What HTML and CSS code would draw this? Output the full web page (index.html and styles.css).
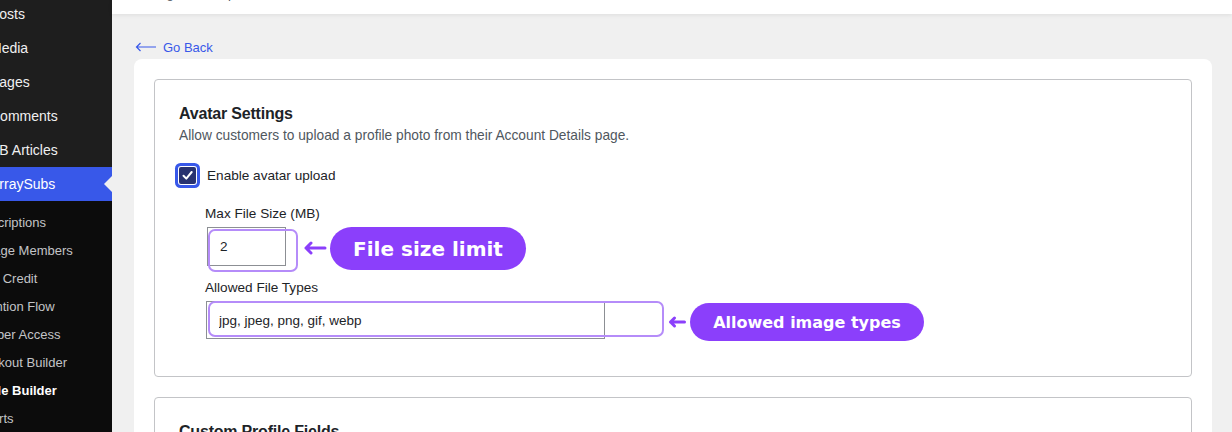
FILE: index.html
```html
<!DOCTYPE html>
<html lang="en">
<head>
<meta charset="UTF-8">
<title>Profile Builder - Avatar Settings</title>
<link rel="stylesheet" href="styles.css">
</head>
<body>
<div class="layout">

<aside class="sidebar">
  <ul class="menu">
    <li>Posts</li>
    <li>Media</li>
    <li>Pages</li>
    <li>Comments</li>
    <li>KB Articles</li>
    <li class="active">ArraySubs</li>
  </ul>
  <ul class="submenu">
    <li>Subscriptions</li>
    <li>Manage Members</li>
    <li>Store Credit</li>
    <li>Retention Flow</li>
    <li>Member Access</li>
    <li>Checkout Builder</li>
    <li class="current">Profile Builder</li>
    <li>Reports</li>
  </ul>
</aside>

<main class="main">
  <header class="topbar">
    <div class="crumbs">Manage Subscriptions / Profile Builder</div>
  </header>

  <div class="content">
    <a class="back" href="#">
      <svg width="22" height="10" viewBox="0 0 22 10"><path d="M21 5H1.5M5.5 1L1.5 5l4 4" fill="none" stroke="#3858e9" stroke-width="1.2"/></svg>
      Go Back
    </a>

    <div class="card">
      <section class="box">
        <h3>Avatar Settings</h3>
        <p class="desc">Allow customers to upload a profile photo from their Account Details page.</p>

        <label class="check">
          <span class="tick">
            <svg width="13" height="13" viewBox="0 0 13 13"><path d="M2.5 6.8l2.8 2.8 5.4-6.6" fill="none" stroke="#fff" stroke-width="2" stroke-linecap="round" stroke-linejoin="round"/></svg>
          </span>
          Enable avatar upload
        </label>

        <div class="fields">
          <div class="field">
            <div class="label">Max File Size (MB)</div>
            <div class="row">
              <div class="mark mark-size">
                <input class="input input-size" type="text" value="2">
              </div>
              <svg class="arrow arrow-size" width="24" height="14" viewBox="0 0 24 14"><path d="M22 7H3M8 2L3 7l5 5" fill="none" stroke="#8b3ffb" stroke-width="3" stroke-linecap="round" stroke-linejoin="round"/></svg>
              <span class="pill pill-lg">File size limit</span>
            </div>
          </div>

          <div class="field">
            <div class="label">Allowed File Types</div>
            <div class="row">
              <div class="mark mark-types">
                <input class="input input-types" type="text" value="jpg, jpeg, png, gif, webp">
              </div>
              <svg class="arrow arrow-types" width="18" height="14" viewBox="0 0 18 14"><path d="M16.5 7H2.5M6.5 3L2.5 7l4 4" fill="none" stroke="#8b3ffb" stroke-width="3" stroke-linecap="round" stroke-linejoin="round"/></svg>
              <span class="pill pill-sm">Allowed image types</span>
            </div>
          </div>
        </div>
      </section>

      <section class="box">
        <h3>Custom Profile Fields</h3>
        <p class="desc">Add extra fields to the customer account form.</p>
      </section>
    </div>
  </div>
</main>

</div>
</body>
</html>
```

FILE: styles.css
```css
body {
  margin: 0;
  height: 432px;
  overflow: hidden;
  background: #f0f0f0;
  font-family: "Liberation Sans", Arial, sans-serif;
  color: #1d2327;
}
.layout {
  display: flex;
  height: 432px;
}

/* admin sidebar */
.sidebar {
  width: 112px;
  flex-shrink: 0;
  background: #1e1e1e;
  overflow: hidden;
  display: flex;
  flex-direction: column;
}
.menu, .submenu {
  list-style: none;
  margin: 0;
  padding: 0;
  white-space: nowrap;
}
.menu {
  margin-top: -3.5px;
}
.menu li {
  position: relative;
  height: 34.1px;
  line-height: 34px;
  font-size: 14px;
  color: #f0f0f1;
  text-indent: -10px;
}
.menu li.active {
  background: #3858e9;
  color: #fff;
}
.menu li.active::after {
  content: "";
  position: absolute;
  right: 0;
  top: 9px;
  border: 8px solid transparent;
  border-right-color: #f0f0f0;
}
.submenu {
  flex: 1;
  background: #0c0c0c;
  padding-top: 7.5px;
}
.submenu li {
  height: 28px;
  line-height: 28px;
  font-size: 13px;
  color: #c3c4c7;
  text-indent: -32px;
}
.submenu li.current {
  color: #fff;
  font-weight: bold;
}

/* main area */
.main {
  flex: 1;
  min-width: 0;
}
.topbar {
  height: 14px;
  background: #fff;
  overflow: hidden;
  box-shadow: 0 1px 4px rgba(0,0,0,0.08);
  position: relative;
}
.crumbs {
  margin-top: -14px;
  padding-left: 22px;
  line-height: 16px;
  font-size: 13px;
  color: #50575e;
}
.content {
  padding: 25px 20px 0 22px;
}
.back {
  display: flex;
  align-items: center;
  gap: 6px;
  height: 16px;
  margin-bottom: 4px;
  padding-left: 1px;
  font-size: 13px;
  color: #3858e9;
  text-decoration: none;
}
.card {
  background: #fff;
  border-radius: 8px;
  padding: 20px;
}
.box {
  border: 1px solid #c3c4c7;
  border-radius: 4px;
  padding: 24px 24px 35px;
}
.box + .box {
  margin-top: 20px;
}
.box h3 {
  margin: 0;
  font-size: 16px;
  line-height: 20px;
  font-weight: bold;
  letter-spacing: -0.2px;
}
.desc {
  margin: 3px 0 0;
  font-size: 13.75px;
  line-height: 18px;
  color: #50575e;
}
.check {
  display: flex;
  align-items: center;
  gap: 11px;
  height: 20px;
  margin-top: 20px;
  font-size: 13.6px;
}
.tick {
  width: 17px;
  height: 17px;
  border-radius: 2px;
  background: #283270;
  box-shadow: 0 0 0 1px #fff, 0 0 0 4px #3858e9;
  display: flex;
  align-items: center;
  justify-content: center;
}
.fields {
  padding-left: 26px;
  margin-top: 21px;
}
.field + .field {
  margin-top: 10px;
}
.label {
  font-size: 13.6px;
  line-height: 16px;
  margin-bottom: 5px;
}
.row {
  display: flex;
  align-items: flex-start;
}
.mark {
  position: relative;
}
.mark::after {
  content: "";
  position: absolute;
  border: 2.5px solid #b58cf9;
  border-radius: 7px;
  box-sizing: border-box;
}
.mark-size {
  margin-left: 2px;
}
.mark-size::after {
  left: 1px;
  top: 2px;
  width: 90px;
  height: 43px;
}
.mark-types {
  margin-left: 1px;
}
.mark-types::after {
  left: 2px;
  top: 0;
  width: 456px;
  height: 36px;
}
.input {
  display: block;
  box-sizing: border-box;
  margin: 0;
  border: 1px solid #8c8f94;
  border-radius: 0;
  padding: 0 12px;
  font-family: "Liberation Sans", Arial, sans-serif;
  font-size: 13.5px;
  color: #1d2327;
  background: #fff;
}
.input-size {
  width: 79px;
  height: 39px;
}
.input-types {
  width: 399px;
  height: 38px;
}
.arrow {
  flex-shrink: 0;
}
.arrow-size {
  margin: 14px 0 0 17px;
}
.arrow-types {
  margin: 14px 0 0 63px;
}
.pill {
  display: flex;
  align-items: center;
  justify-content: center;
  background: #8b3ffb;
  color: #fff;
  border-radius: 999px;
  font-family: "DejaVu Sans", Verdana, sans-serif;
  font-weight: bold;
  white-space: nowrap;
}
.pill-lg {
  width: 196px;
  height: 43px;
  margin-left: 3px;
  font-size: 20px;
}
.pill-sm {
  width: 234px;
  height: 38px;
  margin: 2px 0 0 4px;
  font-size: 16px;
}
```
